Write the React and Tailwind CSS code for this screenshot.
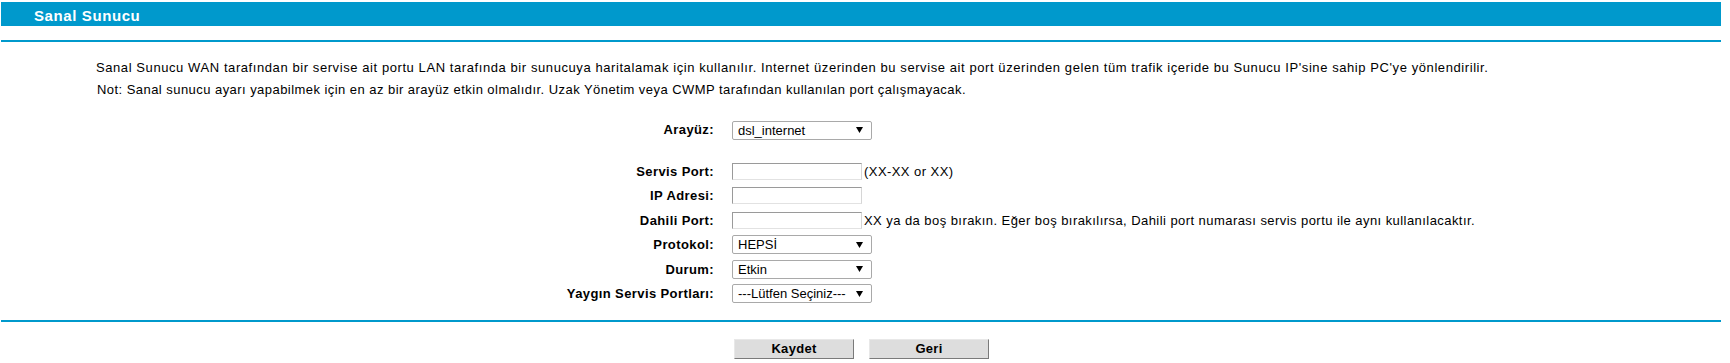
import React from 'react'

const rows = [
  { label: 'Servis Port:', type: 'input', note: '(XX-XX or XX)' },
  { label: 'IP Adresi:', type: 'input' },
  {
    label: 'Dahili Port:',
    type: 'input',
    note: 'XX ya da boş bırakın. Eğer boş bırakılırsa, Dahili port numarası servis portu ile aynı kullanılacaktır.',
  },
  { label: 'Protokol:', type: 'select', value: 'HEPSİ' },
  { label: 'Durum:', type: 'select', value: 'Etkin' },
  { label: 'Yaygın Servis Portları:', type: 'select', value: '---Lütfen Seçiniz---' },
]

const Select = ({ value }) => (
  <div className="flex h-[19px] w-[140px] items-center justify-between rounded-[2px] border border-[#a9a9a9] bg-white pl-[5px] pr-[8px] text-[13px] leading-none">
    <span>{value}</span>
    <svg width="7" height="6" viewBox="0 0 7 6">
      <path d="M0 0h7L3.5 6z" fill="#000" />
    </svg>
  </div>
)

const TextInput = () => (
  <div className="h-[17px] w-[130px] border border-t-[#9a9a9a] border-l-[#9a9a9a] border-r-[#d6d6d6] border-b-[#e2e2e2] bg-white" />
)

const Row = ({ label, className = 'h-[24.5px]', children }) => (
  <div className={`flex items-center ${className}`}>
    <div className="w-[713px] text-right text-[13px] font-bold tracking-[0.4px]">{label}</div>
    <div className="ml-[18px] flex items-center">{children}</div>
  </div>
)

const Button = ({ children }) => (
  <button className="flex h-5 w-[120px] items-center justify-center border border-t-[#e8e8e8] border-l-[#e8e8e8] border-r-[#7a7a7a] border-b-[#7a7a7a] bg-[#dddddd] text-[13px] font-bold tracking-[0.3px] text-black">
    {children}
  </button>
)

export default function App() {
  return (
    <div className="min-h-screen bg-white font-['Liberation_Sans',Arial,sans-serif] text-black">
      <div className="ml-px w-[1720px]">
        <div className="mt-[2px] h-6 bg-[#0099cc] pl-[33px] pt-[1.5px]">
          <span className="text-[15px] font-bold leading-[18px] tracking-[0.6px] text-white">Sanal Sunucu</span>
        </div>
        <div className="mt-[14px] h-[2px] bg-[#0099cc]" />

        <div className="mt-[15px] pl-[95px] text-[13px] leading-[22px]">
          <p className="tracking-[0.58px]">
            Sanal Sunucu WAN tarafından bir servise ait portu LAN tarafında bir sunucuya haritalamak için kullanılır.
            Internet üzerinden bu servise ait port üzerinden gelen tüm trafik içeride bu Sunucu IP'sine sahip PC'ye
            yönlendirilir.
          </p>
          <p className="pl-px tracking-[0.45px]">
            Not: Sanal sunucu ayarı yapabilmek için en az bir arayüz etkin olmalıdır. Uzak Yönetim veya CWMP tarafından
            kullanılan port çalışmayacak.
          </p>
        </div>

        <Row label="Arayüz:" className="mt-[17px] h-6">
          <Select value="dsl_internet" />
        </Row>

        <div className="mt-[17px]">
          {rows.map((r) => (
            <Row key={r.label} label={r.label}>
              {r.type === 'input' ? <TextInput /> : <Select value={r.value} />}
              {r.note && <span className="ml-[2px] text-[13px] tracking-[0.44px]">{r.note}</span>}
            </Row>
          ))}
        </div>

        <div className="mt-[14px] h-[2px] bg-[#0099cc]" />

        <div className="mt-[17px] flex gap-[15px] pl-[733px]">
          <Button>Kaydet</Button>
          <Button>Geri</Button>
        </div>
      </div>
    </div>
  )
}
